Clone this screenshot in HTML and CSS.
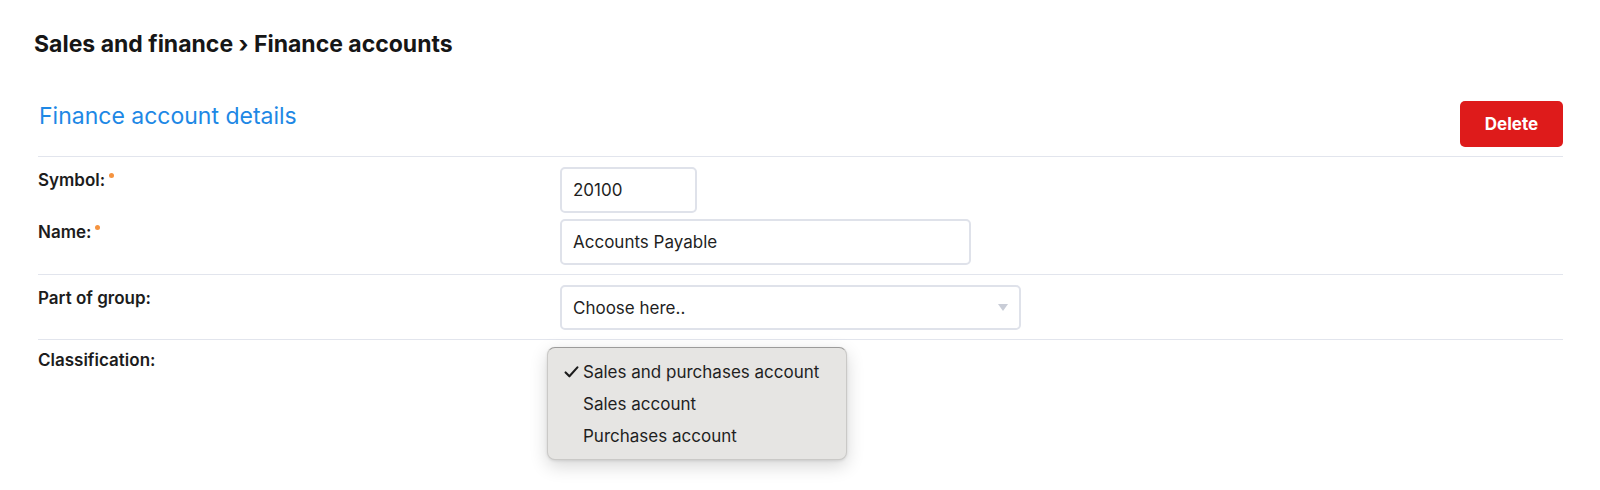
FILE: index.html
```html
<!DOCTYPE html>
<html lang="en">
<head>
<meta charset="utf-8">
<title>Finance accounts</title>
<link rel="stylesheet" href="styles.css">
</head>
<body>
<header class="crumbs">Sales and finance › Finance accounts</header>
<main class="panel">
  <div class="panel-head">
    <h2 class="title">Finance account details</h2>
    <button class="btn-delete" type="button">Delete</button>
  </div>

  <section class="group">
    <div class="field">
      <div class="label">Symbol:<span class="req"></span></div>
      <div class="control"><div class="input input-sym">20100</div></div>
    </div>
    <div class="field">
      <div class="label">Name:<span class="req"></span></div>
      <div class="control"><div class="input input-name">Accounts Payable</div></div>
    </div>
  </section>

  <section class="group">
    <div class="field">
      <div class="label">Part of group:</div>
      <div class="control">
        <div class="input select">
          <span>Choose here..</span>
          <svg class="caret" width="10" height="7" viewBox="0 0 10 7"><path d="M0 0H10L5 7Z" fill="#c9cdd7"/></svg>
        </div>
      </div>
    </div>
  </section>

  <section class="group group-last">
    <div class="field">
      <div class="label">Classification:</div>
      <div class="control control-menu">
        <ul class="menu">
          <li class="menu-item"><span class="check"><svg width="15" height="12" viewBox="0 0 15 12"><path d="M1.6 6.4L5.4 10.3L13.4 1.4" fill="none" stroke="#1c1c1c" stroke-width="2.1" stroke-linecap="round" stroke-linejoin="round"/></svg></span>Sales and purchases account</li>
          <li class="menu-item"><span class="check"></span>Sales account</li>
          <li class="menu-item"><span class="check"></span>Purchases account</li>
        </ul>
      </div>
    </div>
  </section>
</main>
</body>
</html>
```

FILE: styles.css
```css
* { box-sizing: border-box; }

html, body {
  margin: 0;
  padding: 0;
  background: #ffffff;
}

body {
  font-family: Inter, "Noto Sans", "DejaVu Sans", sans-serif;
  color: #1c1c1c;
  width: 1600px;
  min-height: 490px;
}

.crumbs {
  margin: 30px 0 0 34px;
  font-size: 23px;
  line-height: 28px;
  font-weight: 700;
  color: #161616;
}

.panel {
  margin: 43px 37px 0 38px;
}

.panel-head {
  display: flex;
  justify-content: space-between;
  align-items: flex-start;
  padding-bottom: 9px;
  border-bottom: 1px solid #e2e5ed;
}

.title {
  margin: 1px 0 0 1px;
  font-size: 23px;
  line-height: 28px;
  font-weight: 400;
  color: #1e88e5;
}

.btn-delete {
  width: 103px;
  height: 46px;
  border: none;
  border-radius: 5px;
  background: #de1b1b;
  color: #ffffff;
  font-family: inherit;
  font-size: 17px;
  font-weight: 700;
  cursor: pointer;
}

.group {
  display: flex;
  flex-direction: column;
  gap: 6px;
  padding: 10px 0 9px;
  border-bottom: 1px solid #e2e5ed;
}

.group-last {
  border-bottom: none;
  padding-top: 7px;
}

.field {
  display: flex;
  align-items: flex-start;
}

.label {
  width: 522px;
  flex-shrink: 0;
  padding-top: 1px;
  font-size: 17px;
  line-height: 24px;
  font-weight: 600;
  color: #1c1c1c;
}

.req {
  display: inline-block;
  width: 5px;
  height: 5px;
  margin: 5px 0 0 4px;
  vertical-align: top;
  border-radius: 50%;
  background: #f5933f;
}

.control {
  flex: 1;
}

.input {
  display: flex;
  align-items: center;
  height: 46px;
  padding: 0 11px 0 11px;
  border: 2px solid #dfe2ea;
  border-radius: 5px;
  font-size: 17px;
  color: #1f1f1f;
  background: #ffffff;
}

.input-sym { width: 137px; }
.input-name { width: 411px; }

.select {
  width: 461px;
  height: 45px;
  justify-content: space-between;
}

.caret { display: block; }

.control-menu {
  position: relative;
  height: 124px;
}

.menu {
  position: absolute;
  left: -13px;
  top: 0;
  width: 300px;
  margin: 0;
  padding: 8px 0 7px;
  list-style: none;
  background: #e6e5e3;
  border: 1px solid rgba(0, 0, 0, 0.12);
  border-top-color: rgba(0, 0, 0, 0.32);
  border-radius: 8px;
  box-shadow: 0 6px 18px rgba(0, 0, 0, 0.16), 0 1px 3px rgba(0, 0, 0, 0.1);
}

.menu-item {
  display: flex;
  align-items: center;
  height: 32px;
  padding-left: 16px;
  font-size: 17px;
  color: #1f1f1f;
}

.check {
  display: flex;
  align-items: center;
  width: 19px;
  flex-shrink: 0;
}
```
